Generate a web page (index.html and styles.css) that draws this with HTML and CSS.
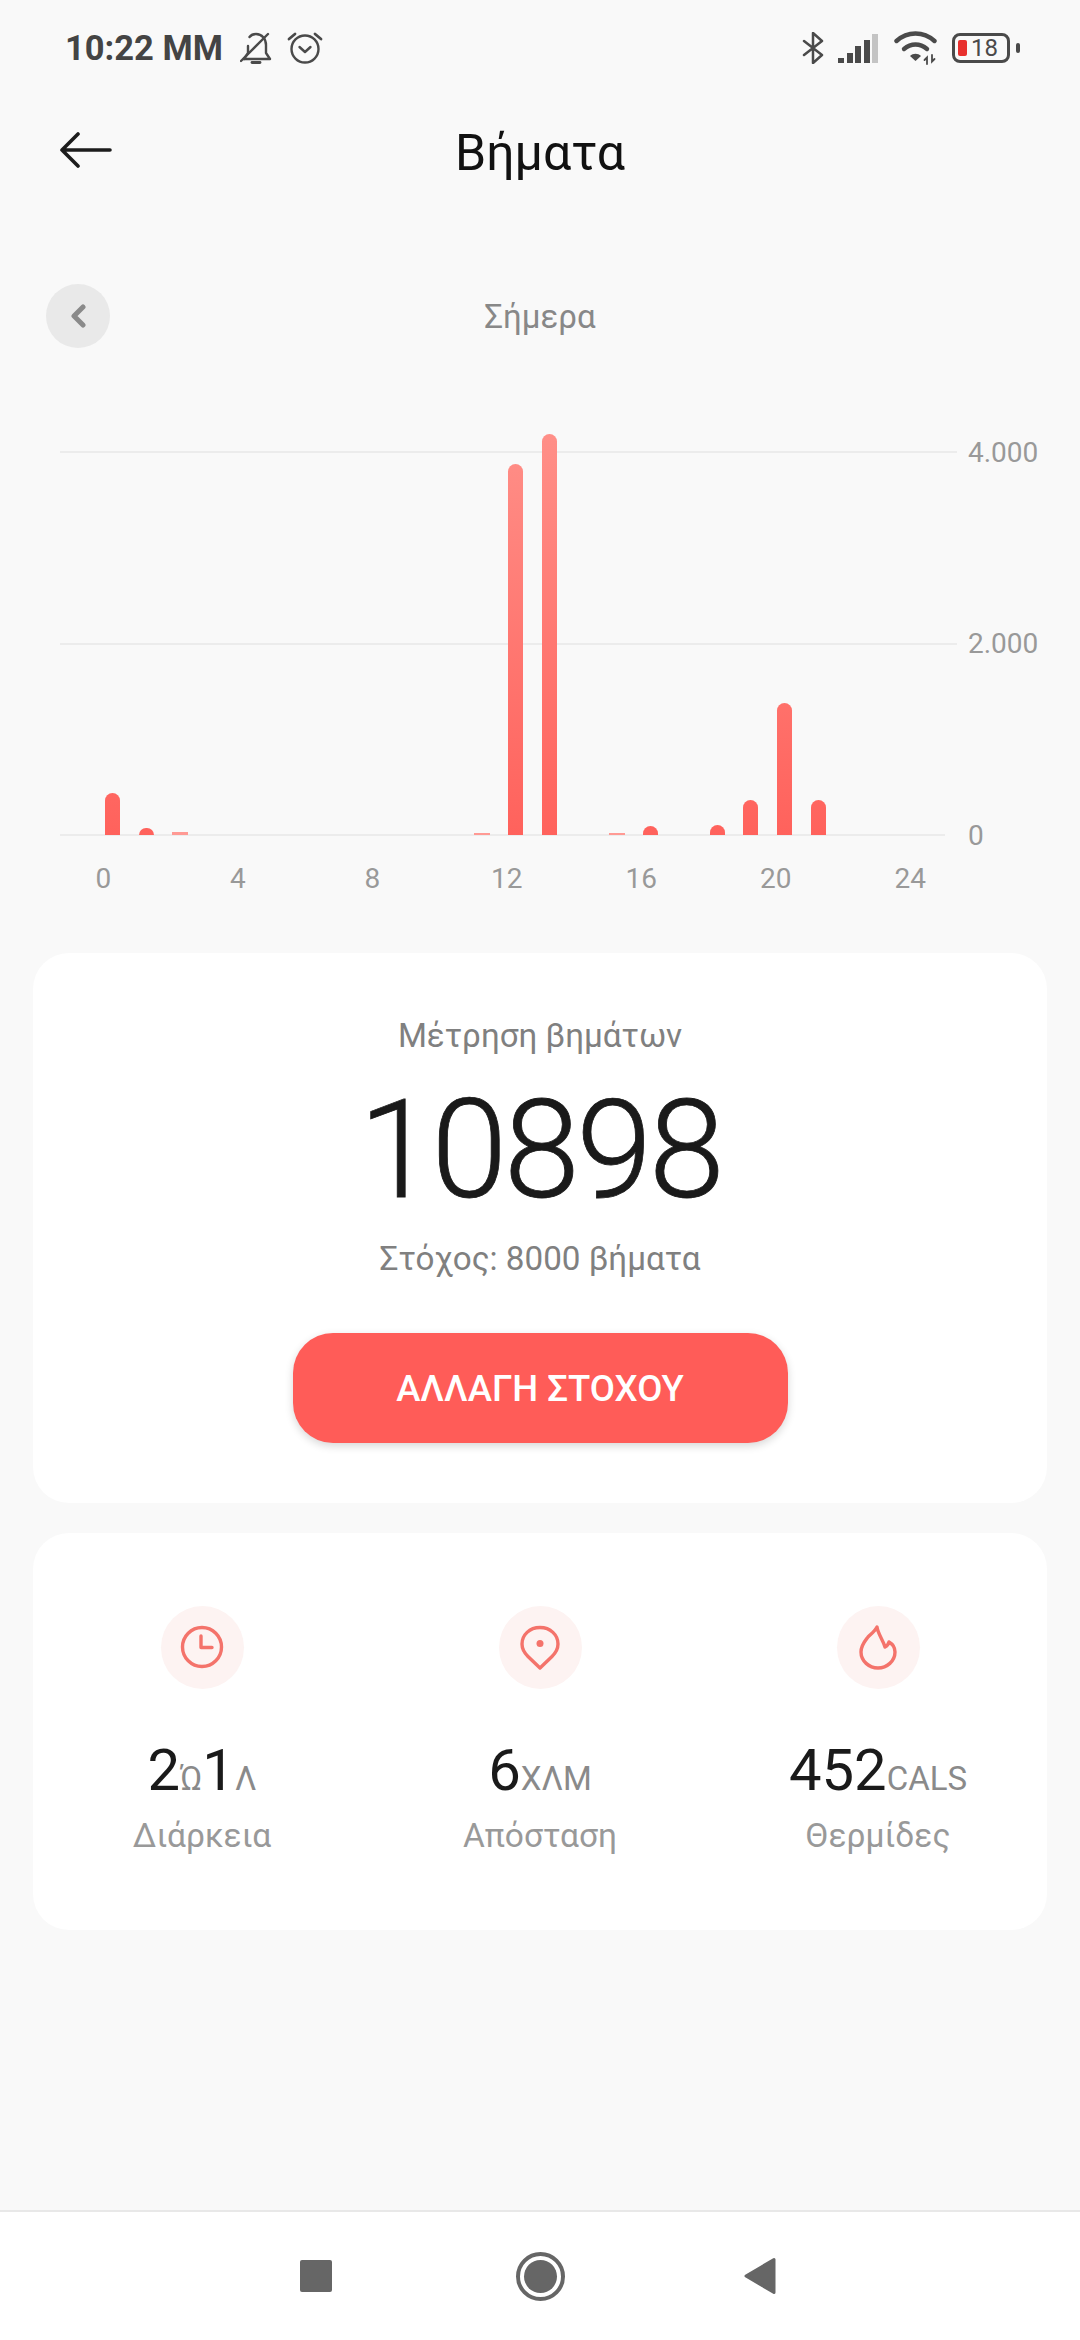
FILE: index.html

```html
<!DOCTYPE html>
<html lang="el">
<head>
  <meta charset="UTF-8" />
  <title>Βήματα</title>
  <link rel="stylesheet" href="styles.css">
</head>
<body>
  <div class="status">
    <span class="time">10:22 ΜΜ</span>
    <svg class="ic-bell" width="32" height="32" viewBox="0 0 32 32" fill="none" stroke="#4a4a4a" stroke-width="2.4" stroke-linecap="round" stroke-linejoin="round">
      <path d="M4 27h26l-4-6V13c0-6-4-11-10-11-2.500 0-5 1-6.500 3"/>
      <path d="M8 14v7l-4 6"/>
      <path d="M1 29L28 2"/>
      <path d="M12 30.500h8" stroke-width="2.800"/>
    </svg>
    <svg class="ic-alarm" width="36" height="34" viewBox="0 0 36 34" fill="none" stroke="#4a4a4a" stroke-width="2.400" stroke-linecap="round" stroke-linejoin="round">
      <circle cx="18" cy="18" r="13.500"/>
      <path d="M12.500 16l5.500 5 5.500-5"/>
      <path d="M2 8l6-5M34 8l-6-5" stroke-width="2.800"/>
    </svg>
    <div class="status-right">
      <svg width="22" height="32" viewBox="0 0 22 32" fill="none" stroke="#4a4a4a" stroke-width="2.500" stroke-linecap="round" stroke-linejoin="round">
        <path d="M2 9l18 14-9 8V1l9 8L2 23"/>
      </svg>
      <div class="signal">
        <i class="s1"></i><i class="s2"></i><i class="s3"></i><i class="s4"></i><i class="s5"></i>
      </div>
      <svg class="wifi" width="44" height="34" viewBox="0 0 44 34" fill="none" stroke="#4a4a4a" stroke-width="4.400" stroke-linecap="round">
        <path d="M2.500 10c11-10 27-10 38 0"/>
        <path d="M10 18c7-6 16-6 23 0"/>
        <path d="M21.500 30l-5.500-5c3-3 8-3 11 0z" fill="#4a4a4a" stroke="none"/>
        <path d="M33 33v-6.500l-2.500 2.500M38 24v6.500l2.500-2.500" stroke-width="1.800"/>
      </svg>
      <div class="battery"><i class="battery-level"></i><span>18</span></div>
      <i class="battery-tip"></i>
    </div>
  </div>

  <div class="header">
    <svg class="back" width="54" height="36" viewBox="0 0 54 36" fill="none" stroke="#1c1c1c" stroke-width="3.600" stroke-linecap="round" stroke-linejoin="round">
      <path d="M50 18H2M18 2L2 18l16 16"/>
    </svg>
    <h1>Βήματα</h1>
  </div>

  <div class="date-row">
    <div class="prev">
      <svg width="18" height="24" viewBox="0 0 18 24" fill="none" stroke="#8a8a8a" stroke-width="5" stroke-linecap="round" stroke-linejoin="round">
        <path d="M14 3L5 12l9 9"/>
      </svg>
    </div>
    <span class="date">Σήμερα</span>
  </div>

  <div class="chart">
    <div class="grid-row"><div class="line"></div><span>4.000</span></div>
    <div class="grid-row"><div class="line"></div><span>2.000</span></div>
    <div class="grid-row zero"><div class="line"></div><span>0</span></div>
    <div class="bars">
      <div class="bar" style="height:42px"></div>
      <div class="bar" style="height:7px"></div>
      <div class="bar small" style="height:3px"></div>
      <div></div><div></div><div></div><div></div><div></div><div></div><div></div><div></div>
      <div class="bar small" style="height:2px"></div>
      <div class="bar" style="height:371px"></div>
      <div class="bar" style="height:401px"></div>
      <div></div>
      <div class="bar small" style="height:2px"></div>
      <div class="bar" style="height:9px"></div>
      <div></div>
      <div class="bar" style="height:10px"></div>
      <div class="bar" style="height:35px"></div>
      <div class="bar" style="height:132px"></div>
      <div class="bar" style="height:35px"></div>
      <div></div><div></div>
    </div>
  </div>
  <div class="x-axis">
    <span>0</span><span>4</span><span>8</span><span>12</span><span>16</span><span>20</span><span>24</span>
  </div>

  <div class="card goal-card">
    <div class="goal-title">Μέτρηση βημάτων</div>
    <div class="goal-count">10898</div>
    <div class="goal-target">Στόχος: 8000 βήματα</div>
    <button class="goal-btn">ΑΛΛΑΓΗ ΣΤΟΧΟΥ</button>
  </div>

  <div class="card stats">
    <div class="stat">
      <div class="stat-icon">
        <svg width="44" height="48" viewBox="0 0 44 48" fill="none" stroke="#f4736b" stroke-width="3.400" stroke-linecap="round" stroke-linejoin="round">
          <circle cx="22" cy="23" r="19.500"/>
          <path d="M21 12v11.500h11"/>
        </svg>
      </div>
      <div class="stat-value">2<small>Ώ</small>1<small>Λ</small></div>
      <div class="stat-label">Διάρκεια</div>
    </div>
    <div class="stat">
      <div class="stat-icon">
        <svg width="44" height="48" viewBox="0 0 44 48" fill="none" stroke="#f4736b" stroke-width="3.400" stroke-linecap="round" stroke-linejoin="round">
          <path d="M22 3.500C11.500 3.500 4 11 4 20c0 5.500 2.500 9 6 12.500L22 44l12-11.500c3.500-3.500 6-7 6-12.500 0-9-7.500-16.500-18-16.500z"/>
          <circle cx="22" cy="19.500" r="3.500" fill="#f4736b" stroke="none"/>
        </svg>
      </div>
      <div class="stat-value">6<small>ΧΛΜ</small></div>
      <div class="stat-label">Απόσταση</div>
    </div>
    <div class="stat">
      <div class="stat-icon">
        <svg width="44" height="48" viewBox="0 0 44 48" fill="none" stroke="#f4736b" stroke-width="3.400" stroke-linecap="round" stroke-linejoin="round">
          <path d="M21 3c1 7 6 13 8 20 2-1 3.500-3 4-5 3.500 2 6 6 6 10 0 9-8 16-17 16S5 37 5 28c0-7 4-11 7-15 3-3 7-6 9-10z"/>
        </svg>
      </div>
      <div class="stat-value">452<small>CALS</small></div>
      <div class="stat-label">Θερμίδες</div>
    </div>
  </div>

  <div class="navbar">
    <i class="nav-square"></i>
    <div class="nav-home"><i></i></div>
    <svg width="32" height="38" viewBox="0 0 32 38" fill="#666666" stroke="#666666" stroke-width="3" stroke-linejoin="round">
      <path d="M30 2.500v33L2 19z"/>
    </svg>
  </div>
</body>
</html>
```

FILE: styles.css

```css
* {
  box-sizing: border-box;
}
body {
  margin: 0;
  width: 1080px;
  height: 2340px;
  overflow: hidden;
  display: flex;
  flex-direction: column;
  background-color: #f9f9f9;
  font-family: Roboto, "Noto Sans", sans-serif;
  color: #1a1a1a;
}

/* status bar */
.status {
  height: 96px;
  padding: 0 60px 0 65px;
  display: flex;
  align-items: center;
}
.time {
  font-size: 34.5px;
  font-weight: 700;
  color: #444;
  width: 175px;
}
.ic-alarm {
  margin-left: 15px;
}
.status-right {
  margin-left: auto;
  display: flex;
  align-items: center;
}
.signal {
  margin-left: 14px;
  height: 29px;
  width: 40px;
  display: flex;
  align-items: flex-end;
  justify-content: space-between;
}
.signal i {
  width: 6px;
  background: #4a4a4a;
}
.s1 { height: 5px; }
.s2 { height: 10px; }
.s3 { height: 17px; }
.s4 { height: 23px; }
.signal .s5 { height: 29px; background: #c4c4c4; }
.wifi {
  margin-left: 16px;
}
.battery {
  margin-left: 14px;
  width: 58px;
  height: 30px;
  border: 3.5px solid #4a4a4a;
  border-radius: 8px;
  display: flex;
  align-items: center;
  padding-left: 3px;
  font-size: 24px;
  color: #4a4a4a;
}
.battery-level {
  width: 9px;
  height: 16px;
  border-radius: 2px;
  background: #e8302e;
  margin-right: 4px;
}
.battery-tip {
  margin-left: 6px;
  width: 4px;
  height: 10px;
  border-radius: 2px;
  background: #4a4a4a;
}

/* title */
.header {
  height: 108px;
  padding: 0 60px;
  display: grid;
  grid-template-columns: 1fr auto 1fr;
  align-items: center;
}
.header h1 {
  margin: 6px 0 0;
  font-size: 50px;
  font-weight: 400;
  color: #111;
}

/* date row */
.date-row {
  margin-top: 80px;
  height: 64px;
  padding: 0 46px;
  display: grid;
  grid-template-columns: 1fr auto 1fr;
  align-items: center;
}
.prev {
  width: 64px;
  height: 64px;
  border-radius: 50%;
  background: #e9e9e9;
  display: flex;
  align-items: center;
  justify-content: center;
}
.date {
  font-size: 33px;
  color: #888;
}

/* chart */
.chart {
  position: relative;
  margin-top: 88px;
  padding-left: 60px;
  height: 415px;
  display: flex;
  flex-direction: column;
  justify-content: space-between;
}
.grid-row {
  height: 32px;
  display: flex;
  align-items: center;
  font-size: 28px;
  color: #999;
}
.line {
  width: 897px;
  height: 2px;
  background: #ececec;
  margin-right: 11px;
}
.zero .line {
  width: 885px;
  margin-right: 23px;
}
.bars {
  position: absolute;
  left: 96px;
  bottom: 16px;
  width: 806px;
  height: 410px;
  display: grid;
  grid-template-columns: repeat(24, 1fr);
  align-items: end;
  justify-items: center;
}
.bar {
  width: 15px;
  border-radius: 8px 8px 0 0;
  background: linear-gradient(to top, #ff625c, #ff9089) bottom / 100% 410px no-repeat;
}
.bar.small {
  width: 16px;
  border-radius: 0;
  background: #ff9a94;
}
.x-axis {
  margin-top: 11px;
  padding-left: 36px;
  display: flex;
  font-size: 28px;
  color: #999;
}
.x-axis span {
  width: 134.5px;
  text-align: center;
}

/* cards */
.card {
  margin: 0 33px;
  background: #fff;
  border-radius: 36px;
}
.goal-card {
  margin-top: 58px;
  height: 550px;
  padding-top: 64px;
  display: flex;
  flex-direction: column;
  align-items: center;
}
.goal-title {
  font-size: 33.2px;
  line-height: 38px;
  color: #808080;
}
.goal-count {
  margin-top: 21px;
  font-size: 137px;
  line-height: 148px;
  font-weight: 300;
  letter-spacing: -3.5px;
  -webkit-text-stroke: 0.8px #1a1a1a;
  color: #1a1a1a;
}
.goal-target {
  margin-top: 16px;
  font-size: 33.2px;
  line-height: 38px;
  color: #808080;
}
.goal-btn {
  margin-top: 55px;
  width: 495px;
  height: 110px;
  border: none;
  border-radius: 40px;
  background-color: #ff5c58;
  color: #fff;
  font-family: inherit;
  font-size: 36.5px;
  font-weight: 500;
  box-shadow: 0 3px 8px rgba(0, 0, 0, 0.16);
}
.stats {
  margin-top: 30px;
  height: 397px;
  padding-top: 73px;
  display: grid;
  grid-template-columns: repeat(3, 1fr);
  align-items: start;
}
.stat {
  display: flex;
  flex-direction: column;
  align-items: center;
}
.stat-icon {
  width: 83px;
  height: 83px;
  border-radius: 50%;
  background: #fdf3f2;
  display: flex;
  align-items: center;
  justify-content: center;
}
.stat-value {
  margin-top: 47px;
  font-size: 58px;
  line-height: 68px;
  color: #1a1a1a;
}
.stat-value small {
  font-size: 33px;
  color: #8a8a8a;
}
.stat-label {
  margin-top: 3px;
  font-size: 33.5px;
  line-height: 40px;
  color: #999;
}

/* nav */
.navbar {
  margin-top: auto;
  height: 130px;
  border-top: 2px solid #e8e8e8;
  background: #fff;
  display: flex;
  align-items: center;
  padding: 0 0 0 300px;
}
.nav-square {
  width: 32px;
  height: 32px;
  border-radius: 2px;
  background: #666;
}
.nav-home {
  margin-left: 184px;
  width: 49px;
  height: 49px;
  border-radius: 50%;
  border: 4px solid #666;
  display: flex;
  align-items: center;
  justify-content: center;
}
.nav-home i {
  width: 33px;
  height: 33px;
  border-radius: 50%;
  background: #666;
}
.navbar svg {
  margin-left: 179px;
}
```
